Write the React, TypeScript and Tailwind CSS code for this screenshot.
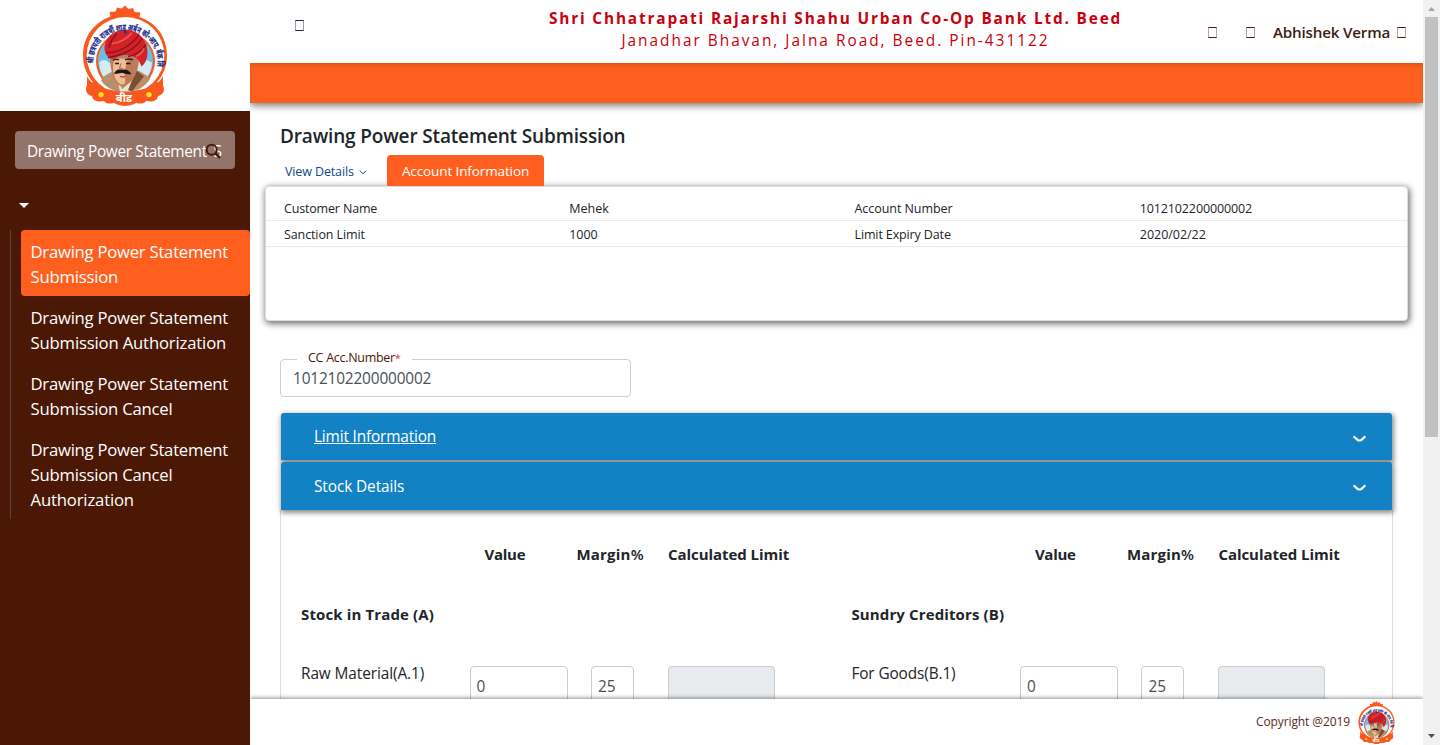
import React from "react";

function Emblem({ className }: { className: string }) {
  const id = React.useId();
  return (
    <svg className={className} viewBox="12 4 86 102" preserveAspectRatio="none" aria-label="Bank emblem">
      <path
        fill="#f9591f"
        d="M55 4.500l3.500 3.500 4.500-1 1.500 4 6 .5-1 4.500C86 21.500 97 36 97 55c0 11-4 20-10 27 4 0 7 3 7 7 0 4-3 6-6 7-1 6-7 6-12 5-2 3-6 3-10 2-3 2-8 3-11 3s-8-1-11-3c-4 1-8 1-10-2-5 1-11 1-12-5-3-1-6-3-6-7 0-4 3-7 7-7-6-7-10-16-10-27 0-19 11-33.500 27.500-39.500l-1-4.500 6-.5 1.500-4 4.500 1z"
      />
      <circle cx="55.500" cy="55" r="38.800" fill="#fff" />
      <path d="M17 76q3 6 8 8 10 7 30 7t30-7q5-2 8-8l0 12q-4 14-38 14T17 88z" fill="#f9591f" />
      <circle cx="55.500" cy="61" r="29.500" fill="#f9591f" />
      <circle cx="55.500" cy="60.500" r="27.500" fill="#6fbde2" />
      <path d="M29 62q5-5 10 0t8-2l20 0q6-3 15 2a27 27 0 0 1-10 20H38q-8-7-9-20z" fill="#d4ebf4" />
      <path d="M31 80c3-5 9-8 14-9l8 4 12-6c6 3 12 5 15 10-5 8-14 13-25 13s-20-5-24-12z" fill="#ba9068" />
      <path d="M45 72l7 17 9-8 6-10 2 8-8 12H50z" fill="#eee2cc" />
      <path d="M66 70l8 6-12 15-4-1z" fill="#7c4e31" />
      <path d="M40 54c0 15 3 31 12 32 9-1 17-13 17-29z" fill="#bd7b58" />
      <path d="M44 58h14l-3 11v14q-3 3-6 0c-4-3-6-10-6-17z" fill="#edbd94" />
      <path d="M43 60q3-2 6-.5M55 59.500q4-2 8 0" stroke="#35201c" strokeWidth="1.500" fill="none" />
      <path d="M45 63h4M56 63h4.500" stroke="#2a1715" strokeWidth="1.500" />
      <path d="M51 63l-1.500 5h3.500" stroke="#9b5f40" strokeWidth=".9" fill="none" />
      <path d="M44 74c1-4 4-5.500 7.500-4.500 4-1 8 .500 10 4.500-4 0-7 0-9.500-1.500-3 1-5 .500-8 1.500z" fill="#1d1413" />
      <path d="M50 76q3 1.500 5 0" stroke="#9d3b2d" strokeWidth="1.300" fill="none" />
      <path d="M34.500 49C34 38 43 29 55 29c12-.5 22 9 22.500 22 0 7-2 12-6 15-2-5-3-7-6-9-7-3-15-3-21 1-5 2-9-3-10-9z" fill="#d3222a" />
      <path d="M36 52c9 1 23-4 33-18M38 57c14-2 27-8 34-19M47 33c-4 4-7 8-8 14M58 56c8-1 14-6 18-12" stroke="#8b121c" strokeWidth="1.400" fill="none" />
      <path d="M42 43c8-1 15-5 20-11M66 56c4-2 7-5 8-8" stroke="#f25a50" strokeWidth="1.800" fill="none" />
      <path id={id} d="M23.800 66A32 32 0 1 1 87.200 66" fill="none" />
      <text fill="#23308c" stroke="#23308c" strokeWidth="0.300" fontSize="9" fontFamily='"Noto Sans Devanagari","Noto Sans",sans-serif' fontWeight="700">
        <textPath href={`#${id}`} startOffset="3" textLength="108" lengthAdjust="spacingAndGlyphs">
          श्री छत्रपती राजर्षी शाहू अर्बन को-आप. बँक लि.
        </textPath>
      </text>
      <text x="54" y="101.500" textAnchor="middle" fill="#fff" fontSize="11" fontFamily='"Noto Sans Devanagari","Noto Sans",sans-serif' fontWeight="700">
        बीड
      </text>
      <circle cx="31" cy="94.500" r="2.700" fill="#ffe21a" />
      <circle cx="79" cy="94.500" r="2.700" fill="#ffe21a" />
    </svg>
  );
}

function EmptyGlyph({ className }: { className: string }) {
  return <span className={`block h-[11px] w-[9px] shrink-0 border ${className}`} />;
}

const menu = [
  { lines: ["Drawing Power Statement", "Submission"], active: true },
  { lines: ["Drawing Power Statement", "Submission Authorization"] },
  { lines: ["Drawing Power Statement", "Submission Cancel"] },
  { lines: ["Drawing Power Statement", "Submission Cancel", "Authorization"] },
];

function Sidebar() {
  return (
    <aside className="flex w-[250px] shrink-0 flex-col bg-[#4a1805] text-white">
      <div className="flex h-[111px] justify-center bg-white pt-[5px]">
        <Emblem className="h-[101px] w-[86px]" />
      </div>
      <div className="relative mx-[15px] mt-5 flex h-[38px] items-center rounded bg-[#92746a] px-3">
        <span className="block flex-1 whitespace-nowrap pt-[3px] text-[15.4px] tracking-[-0.33px]">
          Drawing Power Statement<span className="pl-[3px]"> S</span>
        </span>
        <svg className="absolute left-[190px] top-[12px] h-4 w-4" viewBox="0 0 16 16" fill="none" stroke="#4a1805">
          <circle cx="6.7" cy="6.7" r="5" strokeWidth="2" />
          <path d="M10.4 10.4L15 15" strokeWidth="2.4" />
        </svg>
      </div>
      <div className="ml-[19px] mt-[34px] h-0 w-0 border-x-[5.5px] border-t-[5px] border-x-transparent border-t-white" />
      <nav className="ml-[10px] mt-[22px] flex flex-col border-l border-[#4f4a48] pl-[10px]">
        {menu.map((m, i) => (
          <a
            key={i}
            className={`block rounded pb-[7px] pl-[9.5px] pt-[9px] text-[16.7px] leading-[25px] ${m.active ? "bg-[#ff5f1e]" : ""}`}
          >
            {m.lines.map((l) => (
              <span
                key={l}
                className={`block whitespace-nowrap ${l.startsWith("Drawing") ? "tracking-[-0.25px]" : l.endsWith("Authorization") ? "tracking-[-0.165px]" : "tracking-[-0.21px]"}`}
              >
                {l}
              </span>
            ))}
          </a>
        ))}
      </nav>
    </aside>
  );
}

function Header() {
  return (
    <header className="shrink-0">
      <div className="flex h-[63px] bg-white">
        <div className="w-[250px] pl-[45px] pt-5">
          <EmptyGlyph className="border-x-[#9a9cb0] border-y-[#212529]" />
        </div>
        <div className="w-[671px] pt-2 text-center text-[15.4px] leading-[22px] text-[#c8000c]">
          <div className="font-bold tracking-[1.83px]">Shri Chhatrapati Rajarshi Shahu Urban Co-Op Bank Ltd. Beed</div>
          <div className="tracking-[2px]">Janadhar Bhavan, Jalna Road, Beed. Pin-431122</div>
        </div>
        <div className="flex h-[65px] flex-1 items-center pl-[37px] text-[#4a1805]">
          <EmptyGlyph className="border-x-[#c0a1a0] border-y-[#4a1805]" />
          <EmptyGlyph className="ml-[29px] border-x-[#c0a1a0] border-y-[#4a1805]" />
          <span className="ml-[18px] w-[118px] whitespace-nowrap text-[15.2px] font-semibold tracking-[-0.2px] text-[#3a1c12]">Abhishek Verma</span>
          <EmptyGlyph className="ml-[6px] border-x-[#c0a1a0] border-y-[#4a1805]" />
        </div>
      </div>
      <div className="relative h-10 bg-[#ff5f1e] [clip-path:inset(0_0_-12px_0)] shadow-[0_2px_8px_rgba(0,0,0,0.6),inset_0_3px_4px_-1px_rgba(0,0,0,0.14)]" />
    </header>
  );
}

const details = [
  [
    ["Customer Name", "tracking-[-0.17px]"],
    ["Mehek", ""],
    ["Account Number", "tracking-[-0.058px]"],
    ["1012102200000002", "tracking-[-0.13px]"],
  ],
  [
    ["Sanction Limit", "tracking-[-0.11px]"],
    ["1000", "tracking-[-0.08px]"],
    ["Limit Expiry Date", "tracking-[-0.13px]"],
    ["2020/02/22", "tracking-[-0.022px]"],
  ],
];

function AccountInfo() {
  return (
    <section className="px-[15px]">
      <h1 className="pl-[15px] text-[19px] font-semibold leading-6 tracking-[-0.15px] text-[#212529]">
        Drawing Power Statement Submission
      </h1>
      <div className="mt-[7px] flex h-[31px] pl-5">
        <div className="flex w-[102px] items-center gap-[5px] pt-[4px] text-[12.5px] leading-none tracking-[-0.124px] text-[#0b4a85]">
          View Details
          <svg className="h-[5px] w-[8px]" viewBox="0 0 8 5" fill="none" stroke="currentColor">
            <path d="M.8 .6l3.200 3.200 3.200-3.200" />
          </svg>
        </div>
        <div className="flex w-[157px] items-center justify-center rounded-t bg-[#ff5f1e] pt-[2px] text-[13.5px] leading-none tracking-[-0.113px] text-white">
          Account Information
        </div>
      </div>
      <div className="h-[135px] rounded-sm border border-[#dcdcdc] bg-white pt-[8px] shadow-[1px_2px_6px_1px_rgba(0,0,0,0.55)]">
        {details.map((r, i) => (
          <div key={i} className="grid h-[26px] grid-cols-4 border-b border-[#ebebeb] text-[12.5px] leading-[28px] text-[#212529]">
            {r.map(([t, c]) => (
              <span key={t} className={`pl-[18px] ${c}`}>
                {t}
              </span>
            ))}
          </div>
        ))}
      </div>
    </section>
  );
}

function AccordionBar({ title, className }: { title: string; className: string }) {
  return (
    <div className="relative flex items-center justify-between rounded-t-[3px] bg-[#1282c5] pl-[33px] pr-[26px] text-[15.4px] text-white shadow-[1px_2px_5px_1px_rgba(0,0,0,0.45)]">
      <span className={className}>{title}</span>
      <svg className="mt-[4px] h-[8px] w-[13px]" viewBox="0 0 13 8" fill="none" stroke="#fff" strokeWidth="2.2">
        <path d="M.6 1.400L4.500 4.800Q6.500 6.200 8.500 4.800L12.400 1.400" />
      </svg>
    </div>
  );
}

interface StockColumnProps {
  title: string;
  item: string;
  itemClass: string;
}

function StockColumn({ title, item, itemClass }: StockColumnProps) {
  return (
    <div className="w-[550.4px] shrink-0 pl-5">
      <div className="grid grid-cols-[183.5px_92px_91.5px_1fr] text-[15px] font-bold leading-6 text-[#212529]">
        <span />
        <span className="tracking-[-0.27px]">Value</span>
        <span className="whitespace-nowrap tracking-[0.2px]">
          Margin<span className="font-semibold">%</span>
        </span>
        <span className="tracking-[-0.05px]">Calculated Limit</span>
      </div>
      <div className="mt-9 text-[15px] font-bold leading-6 tracking-[0.13px] text-[#212529]">{title}</div>
      <div className="mt-[36px] grid grid-cols-[169px_121px_77px_107px] text-[15.4px] leading-6 text-[#212529]">
        <span className={itemClass}>{item}</span>
        <div className="mt-[4px] h-[38px] w-[98px] rounded border border-[#c9ccd0] pl-[5.5px] pt-[8px] text-[#495057]">0</div>
        <div className="mt-[4px] h-[38px] w-[43px] rounded border border-[#c9ccd0] pl-[6px] pt-[8px] text-[#495057]">25</div>
        <div className="mt-[4px] h-[38px] rounded border border-[#c9ccd0] bg-[#e7ebee]" />
      </div>
    </div>
  );
}

function Scrollbar() {
  return (
    <div className="flex w-[17px] shrink-0 flex-col items-center bg-[#f1f1f1]">
      <svg className="h-[17px] w-[17px]" viewBox="0 0 17 17">
        <path d="M5 11h7L8.5 7z" fill="#a3a3a3" />
      </svg>
      <div className="h-[420px] w-[13px] bg-[#c1c1c1]" />
      <svg className="mt-auto h-[17px] w-[17px]" viewBox="0 0 17 17">
        <path d="M5 6h7L8.5 10z" fill="#505050" />
      </svg>
    </div>
  );
}

export default function App() {
  return (
    <div className="flex h-[745px] w-[1440px] overflow-hidden bg-white font-['Open_Sans',sans-serif]">
      <Sidebar />
      <div className="flex w-[1173px] shrink-0 flex-col overflow-hidden">
        <Header />
        <main className="flex-1 overflow-hidden pt-[21px]">
          <AccountInfo />
          <div className="relative ml-[30px] mt-[38px] h-[38px] w-[351px] rounded border border-[#ced0d4] pl-3 text-[15.4px] leading-[37px] tracking-[-0.16px] text-[#495057]">
            1012102200000002
            <label className="absolute left-4 top-[-11px] w-[115px] bg-white pl-[11px] text-[12.5px] leading-[18px] tracking-[-0.289px] text-[#4a1805]">
              CC Acc.Number<span className="text-[11px] text-[#e0303a]">*</span>
            </label>
          </div>
          <div className="ml-[30px] mt-[16px] w-[1113px] px-px">
            <div className="grid grid-rows-[47px_48px] gap-[2px]">
              <AccordionBar title="Limit Information" className="underline underline-offset-1 tracking-[-0.16px]" />
              <AccordionBar title="Stock Details" className="pt-px tracking-[-0.1px]" />
            </div>
          </div>
          <div className="ml-[30px] flex h-[260px] w-[1113px] border-x border-[#dcdcdc] pt-8">
            <StockColumn title="Stock in Trade (A)" item="Raw Material(A.1)" itemClass="tracking-[-0.09px]" />
            <StockColumn title="Sundry Creditors (B)" item="For Goods(B.1)" itemClass="tracking-[-0.12px]" />
          </div>
        </main>
        <footer className="relative flex h-[46px] shrink-0 items-center justify-end bg-white pr-[28px] shadow-[0_-1px_4px_rgba(0,0,0,0.45)]">
          <span className="mr-[8px] text-[12px] font-medium tracking-[-0.1px] text-[#5b2a1c]">Copyright @2019</span>
          <Emblem className="h-[43px] w-[37px]" />
        </footer>
      </div>
      <Scrollbar />
    </div>
  );
}
